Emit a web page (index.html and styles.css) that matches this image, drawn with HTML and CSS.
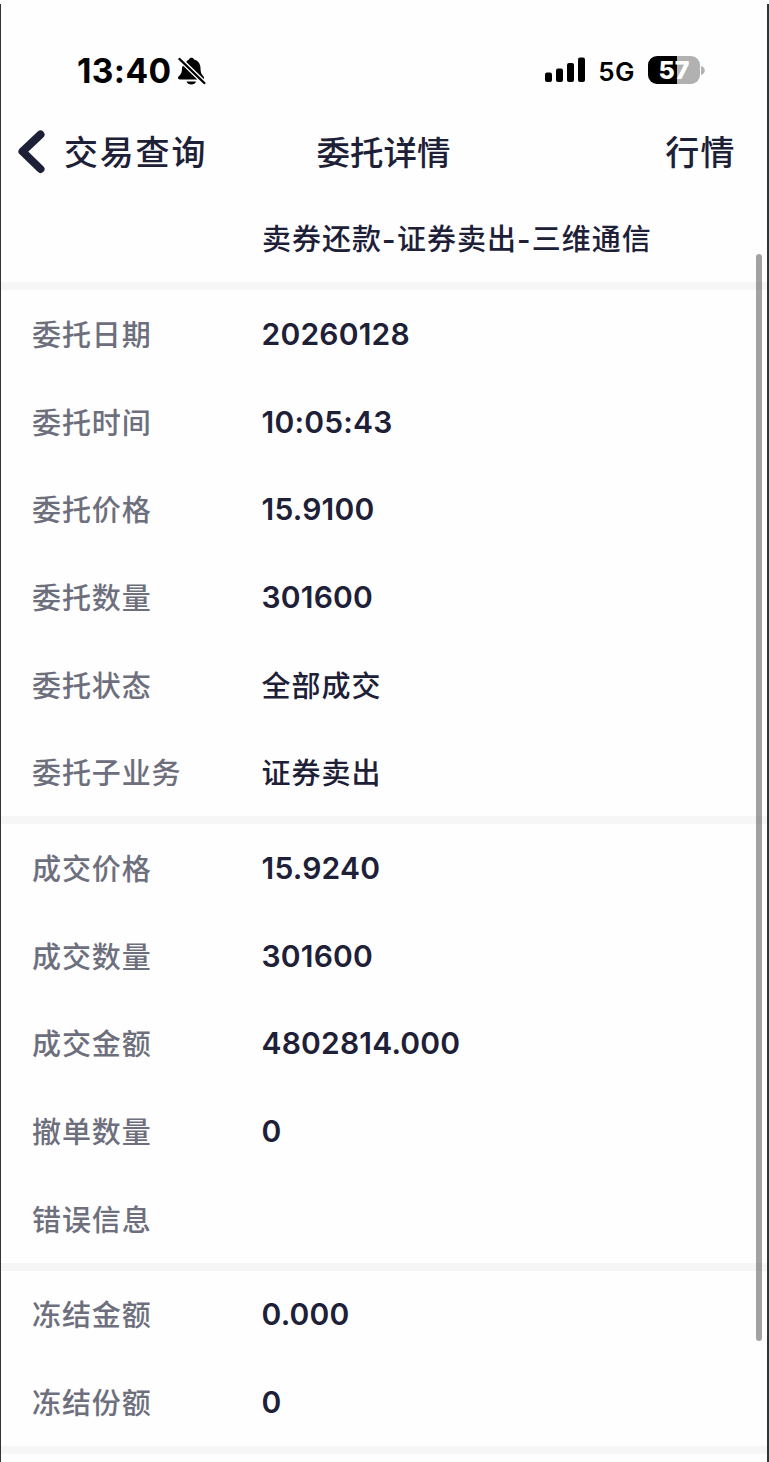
FILE: index.html
```html
<!DOCTYPE html>
<html lang="zh-CN"><head>
<meta charset="utf-8">
<meta name="viewport" content="width=device-width, initial-scale=1.0">
<link rel="stylesheet" href="styles.css">
<title>委托详情</title>
</head><body>
<div class="screen">

<div class="status">
	<div class="status-left">
		<span class="clock">13:40</span>
		<svg class="bell" width="28" height="30" viewBox="0 0 28 30">
			<path d="M7 7.500 C9 4.500 10 3.800 11 3.400 C11.500 1.200 15.500 1.200 16 3.400 C20.500 4.800 22.500 8 22.500 12 C22.500 17 24 18.700 25.500 20.500 C26.500 21.700 26 23.500 24.500 23.500 H2 C0 23.500 -.5 21.700 .5 20.500 C3 18.200 4 17 4 12 C4 10 5.800 8.800 7 7.500 Z M8.500 25.500 H18 C17.300 29.500 9.400 29.500 8.500 25.500 Z"/>
			<path d="M1 2.300 L26.800 27.500" stroke="#fefefe" stroke-width="4.800"/>
			<path d="M1.500 3 L26.300 27" stroke="#000" stroke-width="2.400" stroke-linecap="round"/>
		</svg>
	</div>
	<div class="status-right">
		<svg class="signal" width="40" height="26" viewBox="0 0 40 26">
			<rect x="0" y="15.500" width="7" height="9.500" rx="2"/>
			<rect x="11" y="11.500" width="7" height="13.500" rx="2"/>
			<rect x="22" y="6" width="7" height="19" rx="2"/>
			<rect x="33" y="0.500" width="7" height="24.500" rx="2"/>
		</svg>
		<span class="network">5G</span>
		<div class="battery"><span class="level">57</span></div>
		<svg class="cap" width="4" height="9" viewBox="0 0 4 9"><path d="M0 0 C5 1.500 5 7.500 0 9 Z" fill="#b1b1b1"/></svg>
	</div>
</div>

<div class="nav">
	<div class="nav-back">
		<svg width="28" height="44" viewBox="0 0 28 44"><path d="M23.500 4.500 L5.500 21.500 L23.500 39" fill="none" stroke="#1d2036" stroke-width="8" stroke-linecap="round" stroke-linejoin="round"/></svg>
		<span>交易查询</span>
	</div>
	<div class="nav-title">委托详情</div>
	<div class="nav-right">行情</div>
</div>

<div class="content">
	<div class="summary">卖券还款<b>-</b>证券卖出<b>-</b>三维通信</div>
	<div class="group">
		<div class="row"><span class="label">委托日期</span><span class="value">20260128</span></div>
		<div class="row"><span class="label">委托时间</span><span class="value">10:05:43</span></div>
		<div class="row"><span class="label">委托价格</span><span class="value">15.9100</span></div>
		<div class="row"><span class="label">委托数量</span><span class="value">301600</span></div>
		<div class="row"><span class="label">委托状态</span><span class="value cn">全部成交</span></div>
		<div class="row"><span class="label">委托子业务</span><span class="value cn">证券卖出</span></div>
	</div>
	<div class="group">
		<div class="row"><span class="label">成交价格</span><span class="value">15.9240</span></div>
		<div class="row"><span class="label">成交数量</span><span class="value">301600</span></div>
		<div class="row"><span class="label">成交金额</span><span class="value">4802814.000</span></div>
		<div class="row"><span class="label">撤单数量</span><span class="value">0</span></div>
		<div class="row"><span class="label">错误信息</span><span class="value"></span></div>
	</div>
	<div class="group last">
		<div class="row"><span class="label">冻结金额</span><span class="value">0.000</span></div>
		<div class="row"><span class="label">冻结份额</span><span class="value">0</span></div>
	</div>
	<div class="scrollbar"></div>
</div>

</div>
</body></html>
```
FILE: styles.css
```css
body {
	margin : 0 ;
	background : #fefefe ;
	color : #1d2036 ;
	font-family : Inter, "Noto Sans CJK SC", sans-serif ;
	}
.screen {
	box-sizing : border-box ;
	height : 1462px ;
	padding-top : 45px ;
	border-left : 1px solid #333336 ;
	border-right : 2px solid #333336 ;
	border-image : linear-gradient( #fefefe 5px, #333336 5px ) 1 ;
	overflow : hidden ;
	}
/* status bar */
.status {
	display : flex ;
	justify-content : space-between ;
	height : 50px ;
	padding : 0 62px 0 76px ;
	color : #000 ;
	}
.status-left, .status-right {
	display : flex ;
	align-items : center ;
	}
.clock {
	padding-top : 1px ;
	font-size : 33.5px ;
	font-weight : 700 ;
	letter-spacing : 0.4px ;
	}
.bell {
	margin : 1px 0 0 6px ;
	}
.network {
	margin : 2px 13px 0 13px ;
	font-size : 26px ;
	font-weight : 600 ;
	letter-spacing : 0.5px ;
	}
.battery {
	width : 52px ;
	height : 28px ;
	border-radius : 9px ;
	background : linear-gradient( to right, #000 56%, #b1b1b1 56% ) ;
	text-align : center ;
	}
.level {
	color : #fff ;
	font-size : 25px ;
	font-weight : 800 ;
	line-height : 29px ;
	}
.cap {
	margin-left : 1px ;
	}
/* navigation */
.nav {
	display : grid ;
	grid-template-columns : 1fr auto 1fr ;
	align-items : center ;
	height : 113px ;
	padding : 0 31px 0 16px ;
	font-size : 34px ;
	font-weight : 500 ;
	}
.nav-back {
	display : flex ;
	align-items : center ;
	gap : 19px ;
	letter-spacing : 1.8px ;
	}
.nav-back span, .nav-right {
	margin-top : -3px ;
	}
.nav-title {
	margin : -3px 0 0 14px ;
	font-size : 33.5px ;
	}
.nav-right {
	text-align : right ;
	letter-spacing : 1.4px ;
	}
/* order details */
.content {
	position : relative ;
	font-size : 29px ;
	font-weight : 500 ;
	letter-spacing : 0.9px ;
	}
.summary {
	height : 74px ;
	padding-left : 261px ;
	line-height : 64px ;
	letter-spacing : 1px ;
	}
.summary b {
	font-weight : 600 ;
	letter-spacing : 1.4px ;
	}
.group {
	border-top : 8px solid #f6f6f7 ;
	}
.group.last {
	border-bottom : 8px solid #f6f6f7 ;
	}
.row {
	display : flex ;
	align-items : center ;
	height : 87.7px ;
	padding-left : 31px ;
	}
.label {
	width : 229.5px ;
	padding-bottom : 2px ;
	color : #6d6f7d ;
	}
.value {
	font-size : 30px ;
	font-weight : 560 ;
	letter-spacing : 0.2px ;
	}
.value.cn {
	padding-bottom : 2px ;
	font-size : 29px ;
	font-weight : 500 ;
	letter-spacing : 1px ;
	}
.scrollbar {
	position : absolute ;
	top : 46px ;
	right : 5px ;
	width : 6px ;
	height : 1087px ;
	border-radius : 3px ;
	background : rgba( 0, 0, 0, 0.36 ) ;
	}
```
